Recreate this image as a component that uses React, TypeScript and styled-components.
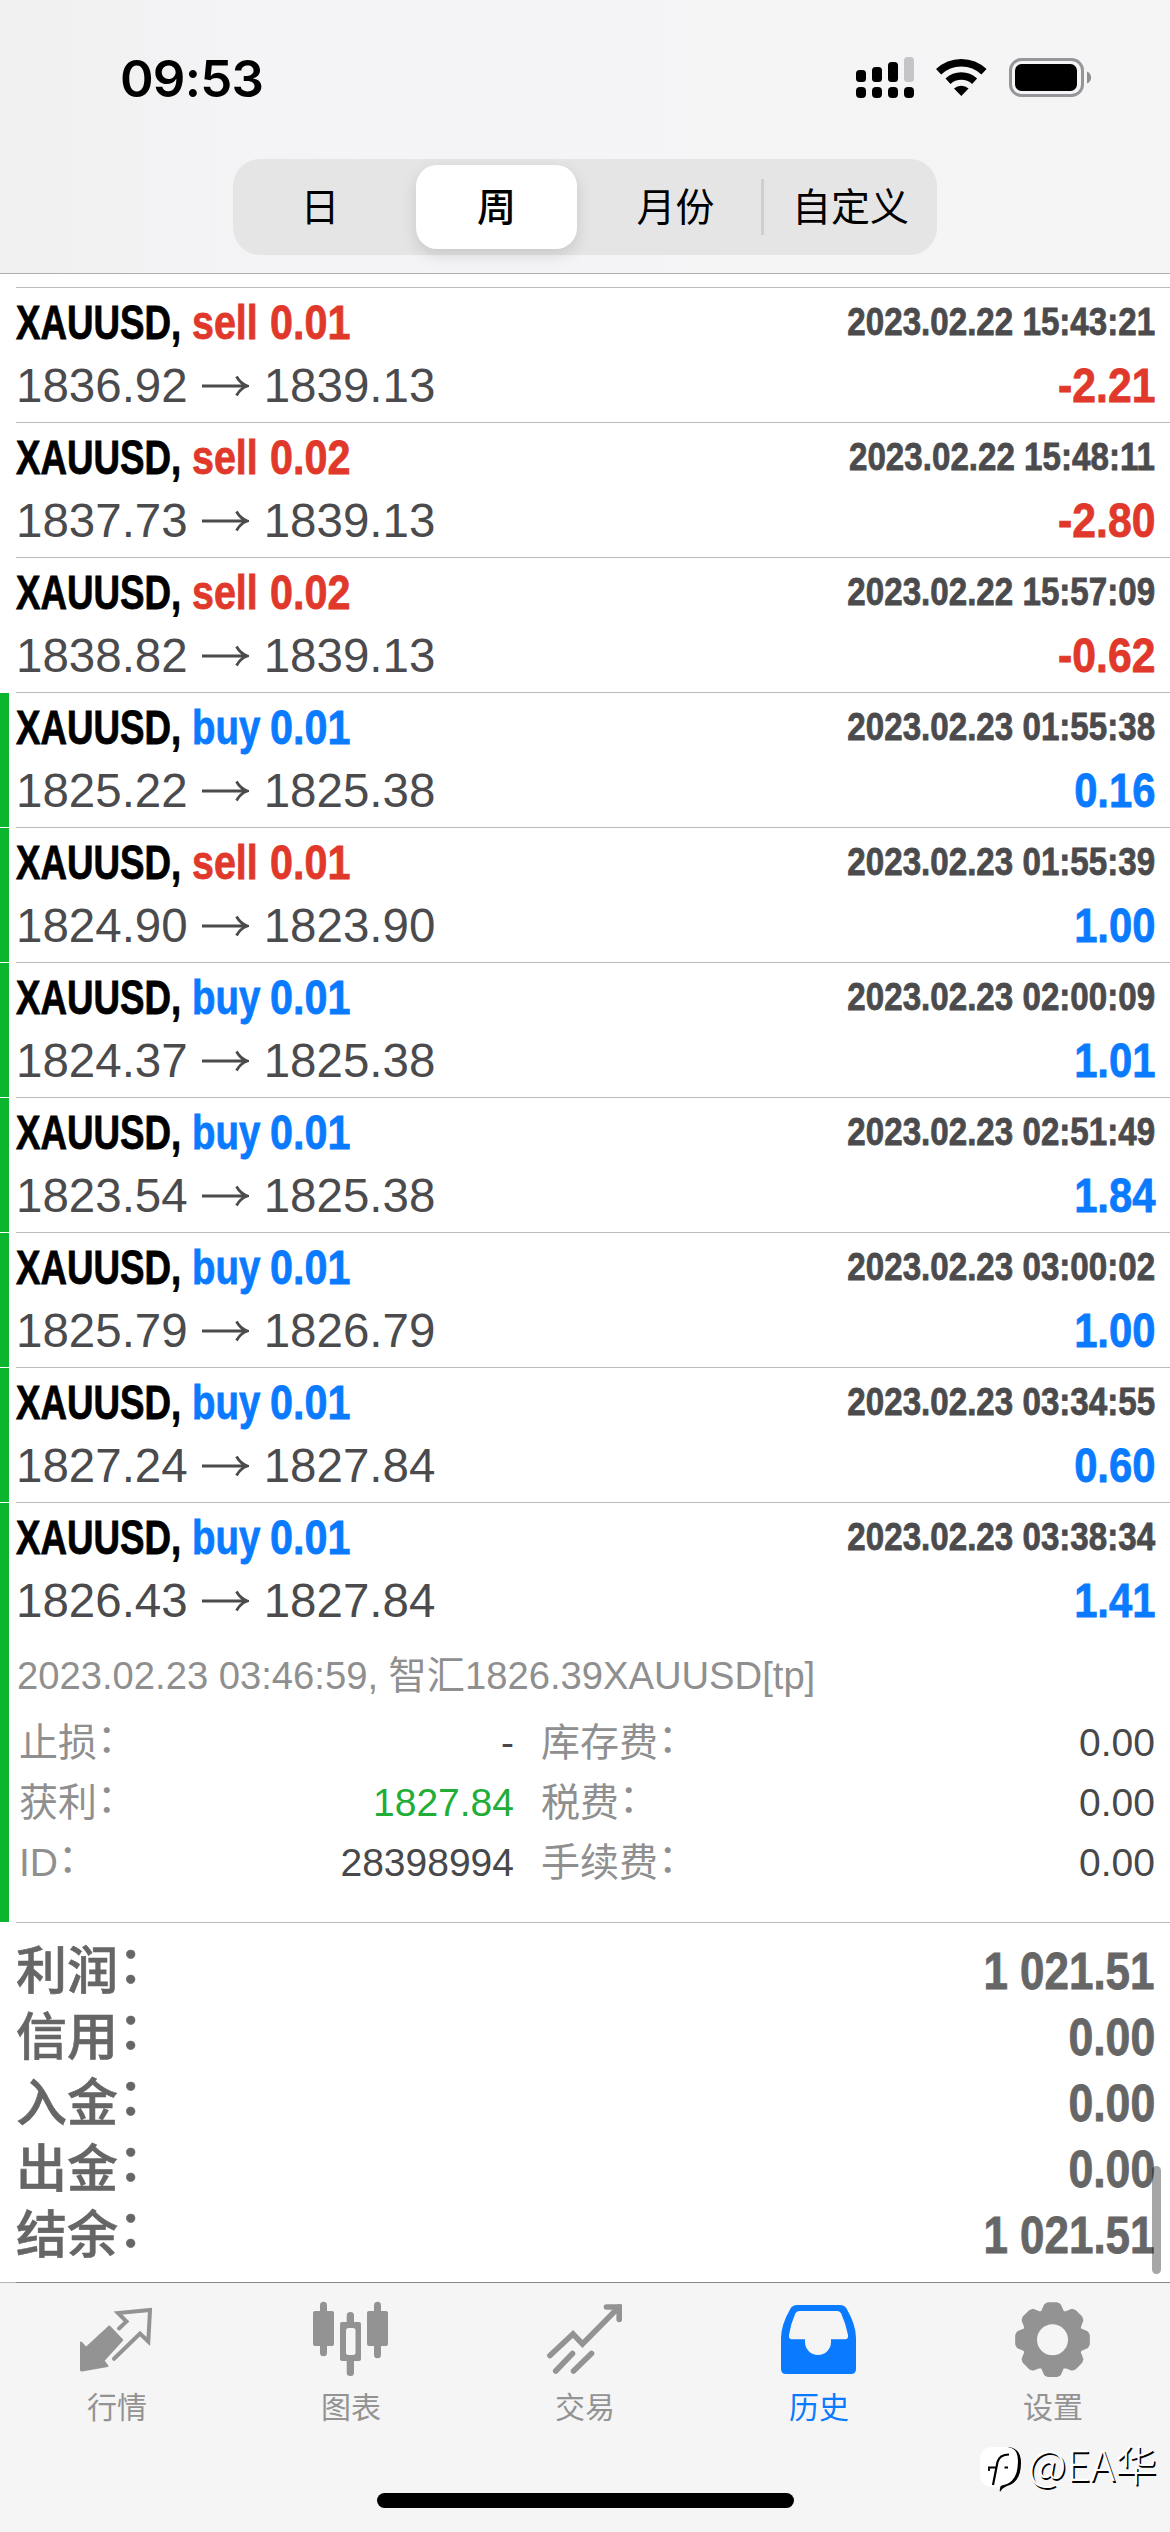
import React from 'react';
import styled, { createGlobalStyle } from 'styled-components';

const GlobalStyle = createGlobalStyle`
  * { box-sizing: border-box; }
  body {
    margin: 0;
    background: #fff;
    font-family: "Liberation Sans", "Noto Sans CJK SC", sans-serif;
  }
`;

const red = '#e0392b';
const blue = '#0a7aff';

const Screen = styled.div`
  position: relative;
  display: flex;
  flex-direction: column;
  width: 1170px;
  height: 2532px;
  overflow: hidden;
  background: #fff;
`;

/* ---------- header ---------- */

const Header = styled.header`
  display: flex;
  flex-direction: column;
  height: 274px;
  border-bottom: 1px solid #b0b0b0;
  background: linear-gradient(90deg, #f0f0f1 0, #f4f4f6 22%, #f5f5f6 100%);
`;

const StatusBar = styled.div`
  display: flex;
  justify-content: space-between;
  align-items: flex-start;
  height: 159px;
  padding: 49px 76px 0 120px;
`;

const Clock = styled.span`
  font-family: Inter, "Liberation Sans", sans-serif;
  font-size: 51px;
  font-weight: 600;
  line-height: 60px;
  letter-spacing: -0.8px;
  color: #000;
`;

const SignalGroup = styled.svg`
  width: 238px;
  height: 48px;
  margin-top: 5px;
`;

const Segments = styled.nav`
  display: flex;
  align-items: stretch;
  width: 704px;
  height: 96px;
  margin-left: 233px;
  padding: 6px;
  border-radius: 27px;
  background: #e5e5e6;
`;

const Segment = styled.button<{ $active?: boolean; $divider?: boolean; $width: number; $pad?: string }>`
  flex: none;
  width: ${p => p.$width}px;
  height: 84px;
  padding: ${p => p.$pad || '1px 0 0'};
  border: 0;
  border-radius: ${p => (p.$active ? 21 : 0)}px;
  background: ${p => (p.$active ? '#fff' : p.$divider
    ? 'linear-gradient(#cfcfd2, #cfcfd2) right 14px / 3px 56px no-repeat' : 'transparent')};
  box-shadow: ${p => (p.$active ? '0 6px 16px rgba(0,0,0,.13)' : 'none')};
  font: ${p => (p.$active ? 500 : 400)} 39px/83px "Liberation Sans", "Noto Sans CJK SC", sans-serif;
  color: #000;
`;

/* ---------- deals ---------- */

const List = styled.main`
  display: flex;
  flex-direction: column;
`;

const Lead = styled.div`
  height: 14px;
  margin-left: 16px;
  border-bottom: 1px solid #bcbcbc;
`;

const Row = styled.section`
  display: flex;
  gap: 7px;
`;

const Marker = styled.div<{ $on?: boolean }>`
  width: 9px;
  margin-bottom: 1px;
  background: ${p => (p.$on ? '#0bb52d' : 'transparent')};
`;

const RowBody = styled.div<{ $tall?: boolean }>`
  flex: 1;
  height: ${p => (p.$tall ? 420 : 135)}px;
  padding: 8px 15px 0 0;
  border-bottom: 1px solid #bcbcbc;
`;

const Line = styled.div`
  display: flex;
  justify-content: space-between;
  height: 54px;
  margin-bottom: 9px;
  line-height: 54px;
  font-size: 48px;
  white-space: nowrap;
`;

const Group = styled.div`
  display: flex;
`;

const Narrow = styled.span<{ $w?: number; $x: number; $end?: boolean }>`
  display: block;
  width: ${p => (p.$w ? `${p.$w}px` : 'auto')};
  font-weight: 700;
  white-space: nowrap;
  transform: scaleX(${p => p.$x});
  transform-origin: ${p => (p.$end ? 'right' : 'left')} center;
  -webkit-text-stroke: 0.8px currentColor;
`;

const Symbol = styled(Narrow)`
  color: #000;
`;

const Side = styled(Narrow)<{ $color: string }>`
  color: ${p => p.$color};
`;

const Stamp = styled(Narrow)`
  font-size: 39px;
  line-height: 51px;
  height: 51px;
  color: #4b4b4d;
`;

const Profit = styled(Narrow)<{ $color: string }>`
  color: ${p => p.$color};
`;

const Prices = styled.div`
  display: flex;
  align-items: center;
  font-size: 47.5px;
  color: #4b4b4d;
`;

const ArrowIcon = styled.svg`
  width: 48px;
  height: 24px;
  margin: 0 15px 0 13px;
`;

const Comment = styled.div`
  height: 60px;
  margin: 18px 0 7px 1px;
  font-size: 38.2px;
  line-height: 60px;
  white-space: nowrap;
  color: #8f8f8f;
`;

const Details = styled.div`
  display: grid;
  grid-template-columns: 495px 614px;
  column-gap: 27px;
  margin-left: 3px;
`;

const Cell = styled.div`
  display: flex;
  justify-content: space-between;
  height: 60px;
  font-size: 39px;
  line-height: 60px;
`;

const Label = styled.span`
  color: #8f8f8f;
`;

const Value = styled.span<{ $good?: boolean }>`
  color: ${p => (p.$good ? '#22ad38' : '#48484a')};
`;

const Colon = styled.span`
  display: inline-block;
  font-family: "Noto Sans CJK SC", sans-serif;
  line-height: 1;
  transform: translateY(-0.11em);
`;

/* ---------- totals ---------- */

const Totals = styled.section`
  display: flex;
  flex-direction: column;
  height: 359px;
  padding: 16px 15px 0 16px;
`;

const Total = styled.div`
  display: flex;
  justify-content: space-between;
  height: 66px;
  font-size: 51px;
  line-height: 66px;
  color: #666;
`;

const TotalLabel = styled.span`
  font-family: "Liberation Sans", "Noto Sans CJK SC", sans-serif;
  font-weight: 500;
  -webkit-text-stroke: 0.6px currentColor;
`;

const ScrollThumb = styled.div`
  position: absolute;
  top: 2166px;
  left: 1152px;
  width: 9px;
  height: 108px;
  border-radius: 5px;
  background: rgba(0, 0, 0, 0.35);
`;

/* ---------- tab bar ---------- */

const TabBar = styled.footer`
  display: flex;
  flex-direction: column;
  flex: 1;
  background: #f5f5f5;
`;

const TabEdge = styled.div`
  height: 1px;
  background: linear-gradient(90deg, #b6b6b6 16px, #868686 16px);
`;

const Tabs = styled.nav`
  display: flex;
  padding-top: 17px;
`;

const Tab = styled.div<{ $active?: boolean }>`
  display: flex;
  flex-direction: column;
  align-items: center;
  width: 234px;
  color: ${p => (p.$active ? blue : '#939393')};
  svg { width: 80px; height: 80px; }
`;

const TabLabel = styled.span`
  margin-top: 8px;
  font-size: 30px;
  line-height: 40px;
`;

const HomeIndicator = styled.div`
  align-self: center;
  width: 417px;
  height: 15px;
  margin: auto 0 24px;
  border-radius: 8px;
  background: #000;
`;

const Watermark = styled.div`
  position: absolute;
  top: 2440px;
  left: 980px;
  display: flex;
  align-items: flex-start;
  gap: 4px;
  font: 300 42px/46px "Noto Sans CJK SC", sans-serif;
  color: #fff;
  text-shadow: 1.5px 1.5px 0 #000;
  white-space: nowrap;
`;

/* ---------- icons ---------- */

const StatusIcons = () => (
  <SignalGroup viewBox="856 54 238 48">
    {[70, 67, 62, 57].map((y, i) => (
      <g key={y}>
        <rect x={856 + i * 16} y={y} width="10" height={82 - y} rx="3.5" fill={i === 3 ? '#c5c5c7' : '#000'} />
        <rect x={856 + i * 16} y="87" width="10" height="11" rx="4" fill="#000" />
      </g>
    ))}
    <g fill="none" stroke="#000" strokeWidth="7.4">
      <path d="M938.6 71.8A33 33 0 0 1 984 71.8" />
      <path d="M948 81.2A19.6 19.6 0 0 1 974.6 81.2" />
    </g>
    <path d="M961.3 96L954 88.6A10.5 10.5 0 0 1 968.6 88.6Z" fill="#000" />
    <rect x="1010.5" y="59.5" width="72" height="36" rx="11" fill="none" stroke="#96969a" strokeWidth="3" />
    <rect x="1015" y="64" width="62" height="27" rx="6.5" fill="#000" />
    <path d="M1087 71.5C1092.5 73.5 1092.5 81.5 1087 83.5Z" fill="#8f8f93" />
  </SignalGroup>
);

const PriceArrow = () => (
  <ArrowIcon viewBox="0 0 48 24" fill="none" stroke="currentColor" strokeWidth="2.8">
    <path d="M1 12H46M35.5 2.5C38 7 42 10.5 46.5 12C42 13.5 38 17 35.5 21.5" />
  </ArrowIcon>
);

const QuotesIcon = () => (
  <svg viewBox="0 0 80 80">
    <path
      d="M4 42.5L9 48L32.3 26.5L45.2 40L26.5 60.5L30.5 66L5 70.5L4 70Z"
      fill="currentColor" stroke="currentColor" strokeWidth="2" strokeLinejoin="round"
    />
    <path
      d="M42 28.5L49.5 21.5L41 13L73 10L71.3 41.5L63 33.5L37 58.8"
      fill="none" stroke="currentColor" strokeWidth="4" strokeLinecap="round"
    />
  </svg>
);

const ChartIcon = () => (
  <svg viewBox="0 0 80 80" fill="currentColor">
    <rect x="9" y="1.7" width="7" height="54.5" rx="3.5" />
    <rect x="2" y="11" width="21" height="35" rx="2" />
    <rect x="35.7" y="12" width="7.3" height="30" rx="3.5" />
    <rect x="35.7" y="50" width="7.3" height="26" rx="3.5" />
    <rect x="29" y="22" width="21" height="39" rx="2" />
    <rect x="35" y="28" width="9.5" height="27" rx="2.5" fill="#f5f5f5" />
    <rect x="63" y="1.7" width="7" height="56.5" rx="3.5" />
    <rect x="56" y="11" width="21" height="35" rx="2" />
  </svg>
);

const TradeIcon = () => (
  <svg viewBox="0 0 80 80" fill="none" stroke="currentColor" strokeWidth="5.6" strokeLinecap="round">
    <path d="M5 55.5L28 34L37.5 44L74 7" />
    <path d="M61.5 7H74.2V19.5" />
    <path d="M10.7 71L27.5 53.5M28.5 71L46.5 53.5" />
  </svg>
);

const HistoryIcon = () => (
  <svg viewBox="0 0 80 80">
    <path
      fill="currentColor" fillRule="evenodd"
      d="M18 5H61Q65.5 5 67.5 8.5Q77 25 77 38V69Q77 74 72 74H7Q2 74 2 69V38Q2 25 11.5 8.5Q13.5 5 18 5Z
         M20 11Q17.5 11 16.3 13.5Q12 23 10 35Q9.5 39.3 13 39.3H26V42A13 13 0 0 0 52 42V39.3H66Q69.5 39.3 69 35Q66.5 23 62.2 13.5Q61 11 58.5 11Z"
    />
  </svg>
);

const gearPoints = Array.from({ length: 8 }, (_, i) => {
  const base = i * 45;
  return [[-19.5, 29], [-11, 34.8], [-7, 35.6], [7, 35.6], [11, 34.8], [19.5, 29]]
    .map(([a, r]) => {
      const t = ((base + a) * Math.PI) / 180;
      return `${(39.5 + r * Math.sin(t)).toFixed(2)},${(39.7 - r * Math.cos(t)).toFixed(2)}`;
    })
    .join(' ');
}).join(' ');

const SettingsIcon = () => (
  <svg viewBox="0 0 80 80">
    <polygon points={gearPoints} fill="currentColor" stroke="currentColor" strokeWidth="4" strokeLinejoin="round" />
    <circle cx="39.5" cy="39.7" r="15.5" fill="#f5f5f5" />
  </svg>
);

const MarkIcon = () => (
  <svg width="44" height="54" viewBox="0 0 44 54">
    <path d="M28 7Q41 8 41 23Q41 42 27 46Q22 48 20 52Q19 48 22 44Z" fill="#000" />
    <path d="M13 7H26Q38 7 38 21Q38 39 27 44L17 47H13Q0 47 0 34V20Q0 7 13 7Z" fill="#fff" />
    <path d="M13 45L17.5 22Q19.5 14.5 29 14.5" fill="none" stroke="#000" strokeWidth="2.2" />
    <path d="M9 31V27.5H16M24.5 27.5H28" fill="none" stroke="#000" strokeWidth="1.8" />
  </svg>
);

/* ---------- data ---------- */

type Deal = {
  side: 'buy' | 'sell';
  volume: string;
  open: string;
  close: string;
  time: string;
  profit: string;
  target?: boolean;
};

const deals: Deal[] = [
  { side: 'sell', volume: '0.01', open: '1836.92', close: '1839.13', time: '2023.02.22 15:43:21', profit: '-2.21' },
  { side: 'sell', volume: '0.02', open: '1837.73', close: '1839.13', time: '2023.02.22 15:48:11', profit: '-2.80' },
  { side: 'sell', volume: '0.02', open: '1838.82', close: '1839.13', time: '2023.02.22 15:57:09', profit: '-0.62' },
  { side: 'buy', volume: '0.01', open: '1825.22', close: '1825.38', time: '2023.02.23 01:55:38', profit: '0.16', target: true },
  { side: 'sell', volume: '0.01', open: '1824.90', close: '1823.90', time: '2023.02.23 01:55:39', profit: '1.00', target: true },
  { side: 'buy', volume: '0.01', open: '1824.37', close: '1825.38', time: '2023.02.23 02:00:09', profit: '1.01', target: true },
  { side: 'buy', volume: '0.01', open: '1823.54', close: '1825.38', time: '2023.02.23 02:51:49', profit: '1.84', target: true },
  { side: 'buy', volume: '0.01', open: '1825.79', close: '1826.79', time: '2023.02.23 03:00:02', profit: '1.00', target: true },
  { side: 'buy', volume: '0.01', open: '1827.24', close: '1827.84', time: '2023.02.23 03:34:55', profit: '0.60', target: true },
  { side: 'buy', volume: '0.01', open: '1826.43', close: '1827.84', time: '2023.02.23 03:38:34', profit: '1.41', target: true },
];

const details = [
  { label: '止损', value: '-' },
  { label: '库存费', value: '0.00' },
  { label: '获利', value: '1827.84', good: true },
  { label: '税费', value: '0.00' },
  { label: 'ID', value: '28398994' },
  { label: '手续费', value: '0.00' },
];

const totals = [
  ['利润', '1 021.51'],
  ['信用', '0.00'],
  ['入金', '0.00'],
  ['出金', '0.00'],
  ['结余', '1 021.51'],
];

const tabs = [
  { label: '行情', Icon: QuotesIcon },
  { label: '图表', Icon: ChartIcon },
  { label: '交易', Icon: TradeIcon },
  { label: '历史', Icon: HistoryIcon, active: true },
  { label: '设置', Icon: SettingsIcon },
];

const DealRow = ({ deal, children }: { deal: Deal; children?: React.ReactNode }) => {
  const sideColor = deal.side === 'sell' ? red : blue;
  const loss = deal.profit.startsWith('-');
  return (
    <Row>
      <Marker $on={deal.target} />
      <RowBody $tall={Boolean(children)}>
        <Line>
          <Group>
            <Symbol $w={176} $x={0.765}>XAUUSD,</Symbol>
            <Side $w={78} $x={deal.side === 'sell' ? 0.82 : 0.8} $color={sideColor}>{deal.side}</Side>
            <Side $x={0.86} $color={sideColor}>{deal.volume}</Side>
          </Group>
          <Stamp $x={0.85} $end>{deal.time}</Stamp>
        </Line>
        <Line>
          <Prices>
            <span>{deal.open}</span>
            <PriceArrow />
            <span>{deal.close}</span>
          </Prices>
          <Profit $x={loss ? 0.89 : 0.87} $end $color={loss ? red : blue}>{deal.profit}</Profit>
        </Line>
        {children}
      </RowBody>
    </Row>
  );
};

export default function App() {
  return (
    <>
      <GlobalStyle />
      <Screen>
        <Header>
          <StatusBar>
            <Clock>09:53</Clock>
            <StatusIcons />
          </StatusBar>
          <Segments>
            <Segment $width={177} $pad="1px 15px 0 0">日</Segment>
            <Segment $width={161} $active>周</Segment>
            <Segment $width={187} $divider $pad="1px 0 0 10px">月份</Segment>
            <Segment $width={167} $pad="1px 0 0 6px">自定义</Segment>
          </Segments>
        </Header>

        <List>
          <Lead />
          {deals.map((deal, i) => (
            <DealRow key={deal.time} deal={deal}>
              {i === deals.length - 1 && (
                <>
                  <Comment>2023.02.23 03:46:59, 智汇1826.39XAUUSD[tp]</Comment>
                  <Details>
                    {details.map(d => (
                      <Cell key={d.label}>
                        <Label>{d.label}<Colon>：</Colon></Label>
                        <Value $good={d.good}>{d.value}</Value>
                      </Cell>
                    ))}
                  </Details>
                </>
              )}
            </DealRow>
          ))}
        </List>

        <Totals>
          {totals.map(([label, value]) => (
            <Total key={label}>
              <TotalLabel>{label}<Colon>：</Colon></TotalLabel>
              <Narrow $x={value.length > 4 ? 0.862 : 0.875} $end>{value}</Narrow>
            </Total>
          ))}
        </Totals>
        <ScrollThumb />

        <TabBar>
          <TabEdge />
          <Tabs>
            {tabs.map(({ label, Icon, active }) => (
              <Tab key={label} $active={active}>
                <Icon />
                <TabLabel>{label}</TabLabel>
              </Tab>
            ))}
          </Tabs>
          <HomeIndicator />
        </TabBar>
        <Watermark>
          <MarkIcon />
          <span>@EA华</span>
        </Watermark>
      </Screen>
    </>
  );
}
